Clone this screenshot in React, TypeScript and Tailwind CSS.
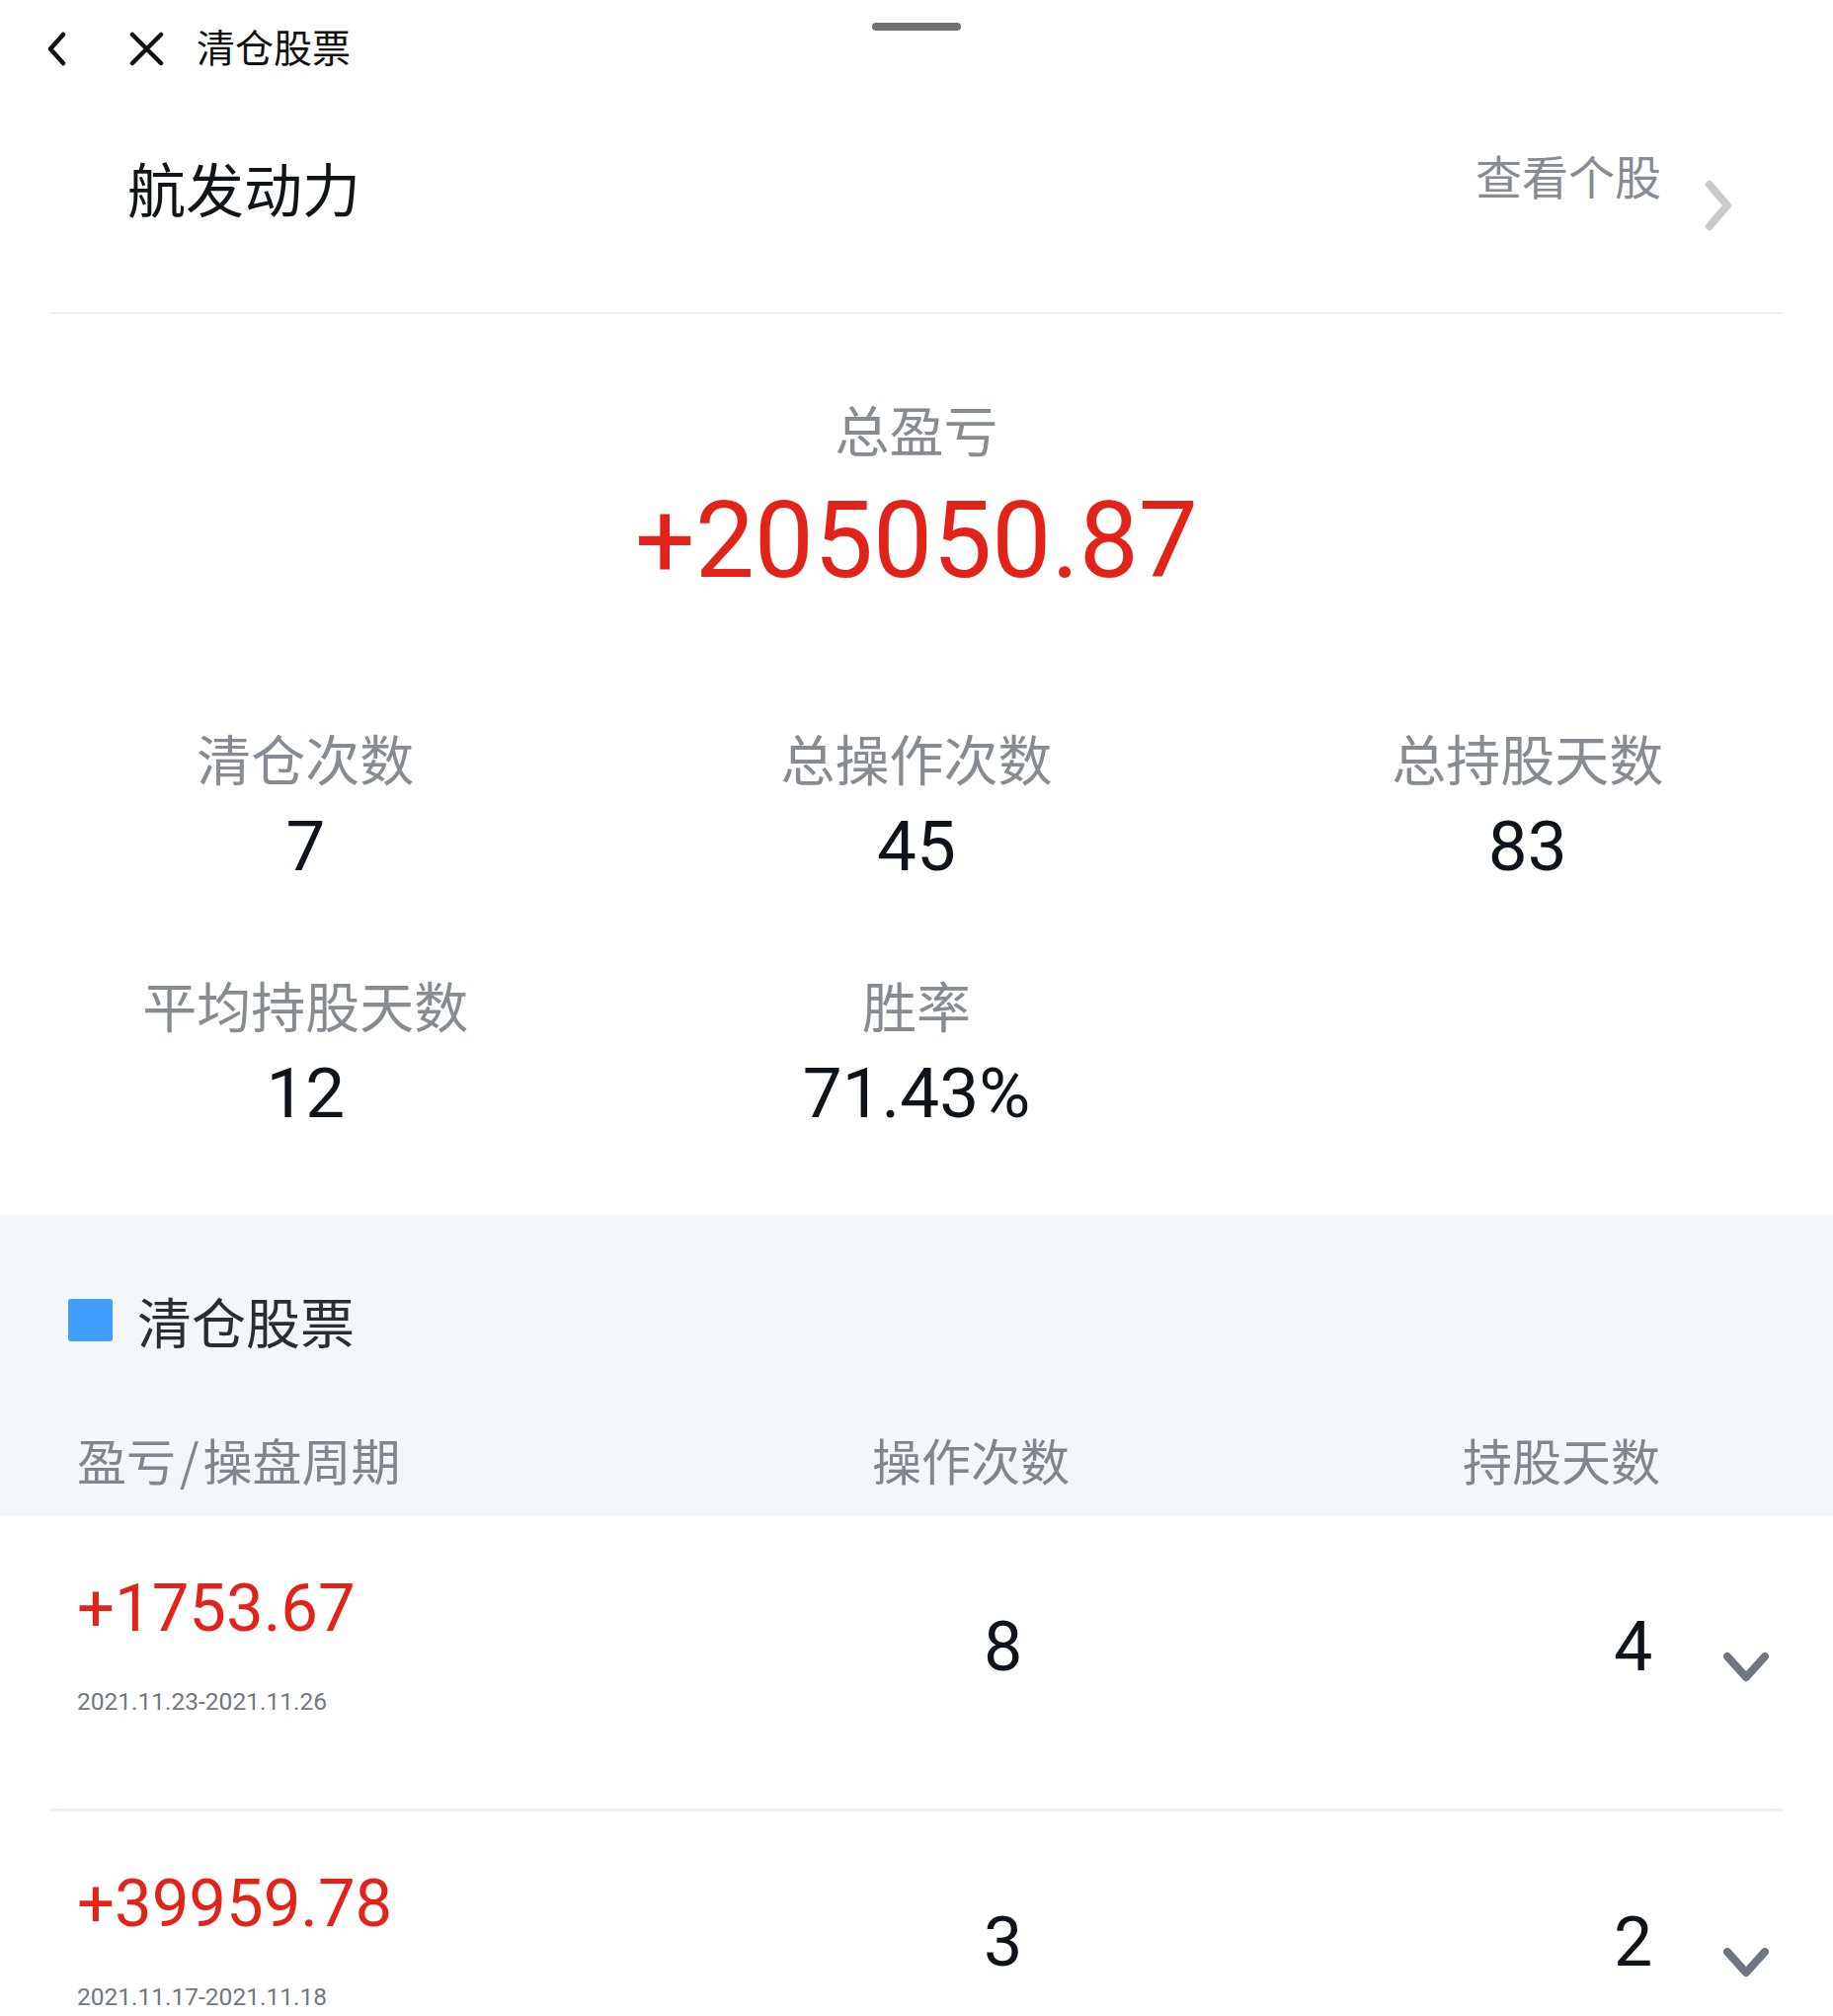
import React from 'react'

const stats = [
  { label: '清仓次数', value: '7' },
  { label: '总操作次数', value: '45' },
  { label: '总持股天数', value: '83' },
  { label: '平均持股天数', value: '12' },
  { label: '胜率', value: '71.43%' },
]

const trades = [
  { pnl: '+1753.67', period: '2021.11.23-2021.11.26', ops: '8', days: '4' },
  { pnl: '+39959.78', period: '2021.11.17-2021.11.18', ops: '3', days: '2' },
]

function ChevronDown() {
  return (
    <svg width="50" height="35" viewBox="0 0 50 35" fill="none">
      <path d="M6 7 L25 28 L44 7" stroke="#6e7780" strokeWidth="8" strokeLinecap="round" strokeLinejoin="round" />
    </svg>
  )
}

export default function App() {
  return (
    <div className="relative w-[1856px] min-h-screen bg-white font-['Noto_Sans_CJK_SC',sans-serif] overflow-hidden">
      {/* sheet handle */}
      <div className="absolute top-[23px] left-1/2 -translate-x-1/2 w-[90px] h-[8px] rounded-full bg-[#6f6f6f]" />

      {/* top bar */}
      <div className="h-[98px] flex items-start pl-[47px]">
        <svg className="mt-[32px]" width="20" height="35" viewBox="0 0 20 35" fill="none">
          <path d="M17 3 L4 17.5 L17 32" stroke="#111" strokeWidth="4.5" strokeLinecap="round" strokeLinejoin="round" />
        </svg>
        <svg className="mt-[32px] ml-[64px]" width="35" height="35" viewBox="0 0 35 35" fill="none">
          <path d="M3 3 L32 32 M32 3 L3 32" stroke="#111" strokeWidth="4.5" strokeLinecap="round" />
        </svg>
        <span className="ml-[33px] mt-[27px] text-[39px] leading-none text-[#111]">清仓股票</span>
      </div>

      {/* stock header */}
      <div className="h-[218px] flex justify-between pl-[129px] pr-[100px]">
        <div className="pt-[62px] text-[59px] leading-none text-[#10151a]">航发动力</div>
        <div className="flex items-start">
          <span className="mt-[55px] text-[47px] leading-none text-[#868c92]">查看个股</span>
          <svg className="mt-[82px] ml-[42px]" width="32" height="56" viewBox="0 0 32 56" fill="none">
            <path d="M7 7 L25 28 L7 49" stroke="#c7cbcf" strokeWidth="8" strokeLinecap="round" strokeLinejoin="round" />
          </svg>
        </div>
      </div>
      <div className="mx-[50px] h-[2px] bg-[#efefef]" />

      {/* summary */}
      <div className="pt-[88px] pb-[88px]">
        <div className="flex flex-col items-center">
          <div className="text-[55px] leading-none text-[#868c92]">总盈亏</div>
          <div className="mt-[33px] font-['Roboto',sans-serif] text-[107px] leading-none text-[#e2231a]">+205050.87</div>
        </div>
        <div className="mt-[138px] grid grid-cols-3 gap-y-[97px]">
          {stats.map((s) => (
            <div key={s.label} className="flex flex-col items-center">
              <div className="text-[55px] leading-none text-[#868c92]">{s.label}</div>
              <div className="mt-[27px] font-['Roboto',sans-serif] text-[71px] leading-none text-[#0f141a]">{s.value}</div>
            </div>
          ))}
        </div>
      </div>

      {/* cleared stocks */}
      <div className="bg-[#f3f7fa] pt-[79px] pb-[33px]">
        <div className="flex items-center pl-[69px]">
          <div className="w-[45px] h-[43px] rounded-[3px] bg-[#3f9efe]" />
          <span className="ml-[25px] text-[55px] leading-none text-[#2a2e33]">清仓股票</span>
        </div>
        <div className="mt-[88px] flex pl-[78px] text-[50px] leading-none text-[#80868d]">
          <span className="w-[805px]">盈亏<span className="mx-[4px]">/</span>操盘周期</span>
          <span className="w-[598px]">操作次数</span>
          <span>持股天数</span>
        </div>
      </div>

      <div>
        {trades.map((t) => (
          <div key={t.period} className="mx-[50px] h-[299px] border-b-[3px] border-[#edf0f3]">
            <div className="flex pl-[28px] font-['Roboto',sans-serif] leading-none">
              <div className="w-[918px] pt-[60px]">
                <div className="text-[67px] leading-none text-[#e2231a]">{t.pnl}</div>
                <div className="mt-[49px] text-[24.5px] leading-none text-[#71787f]">{t.period}</div>
              </div>
              <div className="w-[638px] pt-[97px] text-[70px] text-[#0f141a]">{t.ops}</div>
              <div className="w-[39px] pt-[97px] text-right text-[70px] text-[#0f141a]">{t.days}</div>
              <div className="ml-[70px] pt-[135px]">
                <ChevronDown />
              </div>
            </div>
          </div>
        ))}
      </div>
    </div>
  )
}
